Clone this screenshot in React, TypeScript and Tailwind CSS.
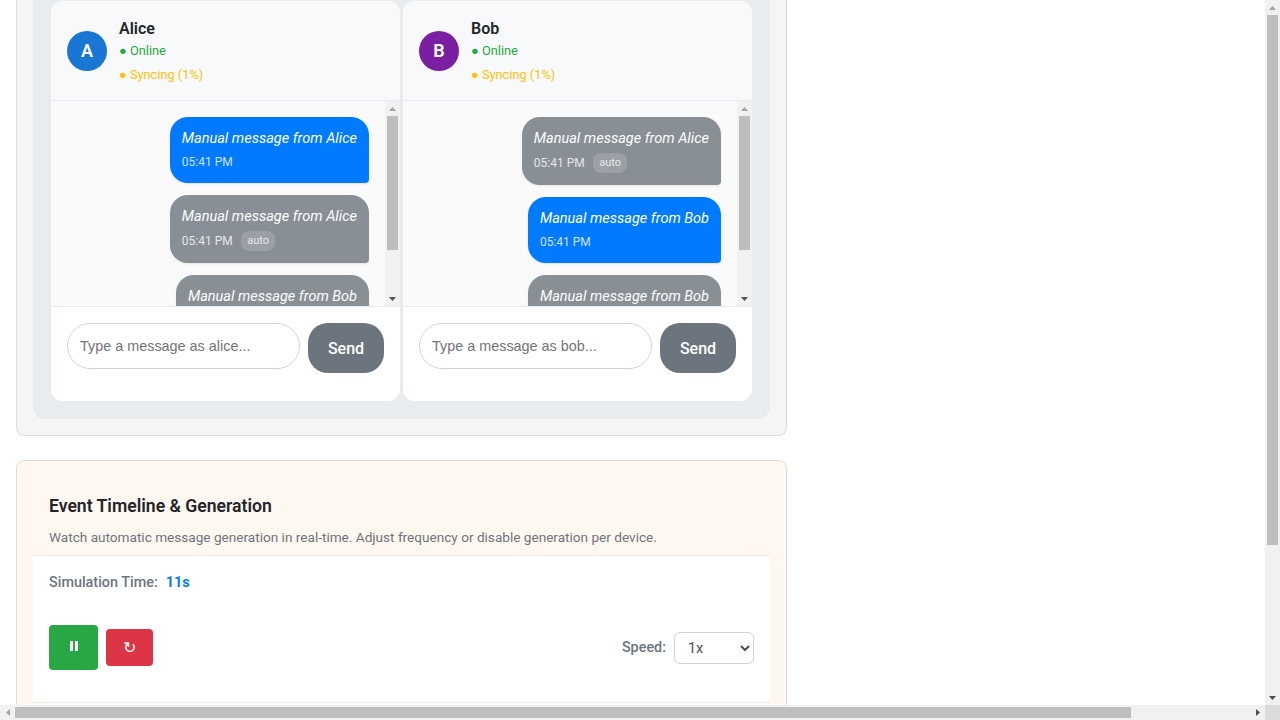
const font = { fontFamily: "Roboto, sans-serif" };

type Msg = { text: string; own: boolean; auto: boolean };

function Arrow({ dir, dim }: { dir: "up" | "down" | "left" | "right"; dim?: boolean }) {
  const points = {
    up: "3.5,0 7,4 0,4",
    down: "0,0 7,0 3.5,4",
    left: "4,0 4,7 0,3.5",
    right: "0,0 4,3.5 0,7",
  }[dir];
  const wide = dir === "up" || dir === "down";
  return (
    <svg
      width={wide ? 7 : 4}
      height={wide ? 4 : 7}
      viewBox={wide ? "0 0 7 4" : "0 0 4 7"}
      fill={dim ? "#a3a3a3" : "#505050"}
    >
      <polygon points={points} />
    </svg>
  );
}

function VScroll({ thumb }: { thumb: string }) {
  return (
    <div className="flex w-[15px] shrink-0 flex-col bg-[#f1f1f1]">
      <div className="flex h-[15px] shrink-0 items-center justify-center">
        <Arrow dir="up" dim />
      </div>
      <div className={`mx-[2px] shrink-0 bg-[#bebebe] ${thumb}`} />
      <div className="flex-1" />
      <div className="flex h-[15px] shrink-0 items-center justify-center">
        <Arrow dir="down" />
      </div>
    </div>
  );
}

function Bubble({ text, own, auto }: Msg) {
  return (
    <div className="mb-3 flex justify-end">
      <div
        className={`rounded-[18px] rounded-br-[4px] p-3 text-white shadow-[0_1px_2px_rgba(0,0,0,0.1)] ${
          own ? "bg-[#007bff]" : "bg-[#6c757d] opacity-80"
        }`}
      >
        <div className="mb-1 text-[14.5px] leading-5 whitespace-nowrap italic">{text}</div>
        <div className="flex items-center text-[12px] leading-[18px] opacity-80">
          <span>05:41 PM</span>
          {auto && (
            <span className="ml-2 rounded-lg bg-white/20 px-[6.5px] py-[1px] text-[11px] leading-[18px]">
              auto
            </span>
          )}
        </div>
      </div>
    </div>
  );
}

function Device({
  name,
  color,
  messages,
}: {
  name: string;
  color: string;
  messages: Msg[];
}) {
  return (
    <div className="flex h-[400px] w-[349px] flex-col overflow-hidden rounded-xl bg-white">
      <div className="flex h-[100px] shrink-0 items-center gap-3 border-b border-[#e9ecef] bg-[#f8f9fa] px-4">
        <div
          className={`flex size-10 items-center justify-center rounded-full pb-px text-[18px] font-semibold text-white ${color}`}
        >
          {name[0]}
        </div>
        <div className="self-start pt-[18px]">
          <div className="text-[16px] leading-5 font-semibold text-[#212529]">{name}</div>
          <div className="text-[12.8px] leading-6 text-[#28a745]">● Online</div>
          <div className="text-[12.8px] leading-6 text-[#ffc107]">● Syncing (1%)</div>
        </div>
      </div>
      <div className="flex h-[205px] shrink-0 bg-[#fafafa]">
        <div className="flex-1 overflow-hidden px-4 pt-4">
          {messages.map((m, i) => (
            <Bubble key={i} {...m} />
          ))}
        </div>
        <VScroll thumb="h-[134px]" />
      </div>
      <div className="flex flex-1 items-start gap-2 border-t border-[#e9ecef] bg-white px-4 pt-4">
        <input
          placeholder={`Type a message as ${name.toLowerCase()}...`}
          className="h-[46px] w-[233px] rounded-[23px] border border-[#ced4da] px-3 pb-px text-[14.4px] placeholder:text-[#757575]"
          style={{ fontFamily: "'Liberation Sans', sans-serif" }}
        />
        <button className="h-[50px] w-[76px] rounded-[20px] bg-[#6c757d] pt-px text-[16px] font-medium text-white">
          Send
        </button>
      </div>
    </div>
  );
}

export default function App() {
  return (
    <div className="flex h-screen w-screen flex-col overflow-hidden bg-white" style={font}>
      <div className="flex min-h-0 flex-1">
        <main className="min-w-0 flex-1 overflow-hidden pl-4">
          <section className="h-[436px] w-[771px] rounded-b-lg border-x border-b border-[#dddddd] bg-[#f5f5f5] px-4">
            <div className="flex h-[419px] gap-[3px] rounded-b-xl bg-[#e9ecef] px-[18px] pt-[1px]">
              <Device
                name="Alice"
                color="bg-[#1976d2]"
                messages={[
                  { text: "Manual message from Alice", own: true, auto: false },
                  { text: "Manual message from Alice", own: false, auto: true },
                  { text: "Manual message from Bob", own: false, auto: true },
                ]}
              />
              <Device
                name="Bob"
                color="bg-[#7b1fa2]"
                messages={[
                  { text: "Manual message from Alice", own: false, auto: true },
                  { text: "Manual message from Bob", own: true, auto: false },
                  { text: "Manual message from Bob", own: false, auto: true },
                ]}
              />
            </div>
          </section>

          <section className="mt-6 h-[413px] w-[771px] rounded-lg border border-[#dddddd] bg-[#fff8f0] px-4">
            <div className="flex h-[94px] flex-col justify-end px-4 pb-2">
              <h3 className="mb-2 text-[17.6px] leading-[26px] font-semibold text-[#212529]">
                Event Timeline &amp; Generation
              </h3>
              <p className="text-[13.6px] leading-5 text-[#6c757d]">
                Watch automatic message generation in real-time. Adjust frequency or disable generation per device.
              </p>
            </div>
            <div className="h-[148px] border-y border-[#e9ecef] bg-white px-4">
              <div className="flex items-center gap-2 pt-4 text-[14.4px] leading-[21px]">
                <span className="font-medium text-[#6c757d]">Simulation Time:</span>
                <span className="font-bold text-[#007bff]">11s</span>
              </div>
              <div className="mt-8 flex items-center justify-between">
                <div className="flex items-center gap-2">
                  <button className="flex h-[45px] w-[49px] items-center justify-center rounded bg-[#28a745] pb-[3px]">
                    <svg width="8" height="10" viewBox="0 0 8 10" fill="#ffffff">
                      <rect x="0" y="0" width="3" height="10" />
                      <rect x="5" y="0" width="3" height="10" />
                    </svg>
                  </button>
                  <button className="h-[37px] w-[47px] rounded bg-[#dc3545] text-[16px] font-light text-white">↻</button>
                </div>
                <div className="flex items-center gap-2">
                  <span className="text-[14.4px] font-medium text-[#6c757d]">Speed:</span>
                  <select className="h-8 w-20 rounded-md border border-[#ced4da] bg-white pt-px pr-2 pl-[9px] text-[14.4px] text-[#495057]">
                    <option>1x</option>
                    <option>2x</option>
                    <option>5x</option>
                  </select>
                </div>
              </div>
            </div>
          </section>
        </main>
        <VScroll thumb="h-[530px]" />
      </div>
      <div className="flex h-[15px] shrink-0 bg-[#f1f1f1]">
        <div className="flex w-[15px] items-center justify-center">
          <Arrow dir="left" dim />
        </div>
        <div className="my-[2px] w-[1116px] bg-[#bebebe]" />
        <div className="flex-1" />
        <div className="flex w-[15px] items-center justify-center">
          <Arrow dir="right" />
        </div>
        <div className="w-[15px] bg-[#dcdcdc]" />
      </div>
    </div>
  );
}
